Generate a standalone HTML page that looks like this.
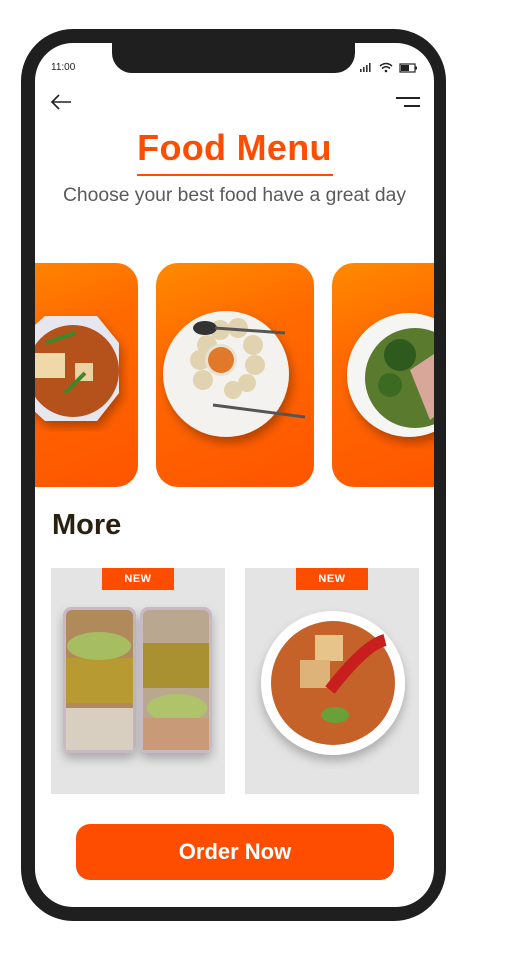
<!DOCTYPE html>
<html><head><meta charset="utf-8"><style>
*{margin:0;padding:0;box-sizing:border-box}
body{width:505px;height:974px;background:#fff;position:relative;overflow:hidden;font-family:"Liberation Sans",sans-serif}
.abs{position:absolute}
.phone{left:21px;top:29px;width:425px;height:892px;background:#1f1f1f;border-radius:52px}
.screen{left:35px;top:43px;width:399px;height:864px;background:#fff;border-radius:38px;overflow:hidden}
.notch{left:77px;top:0;width:243px;height:30px;background:#1f1f1f;border-radius:0 0 20px 20px}
.card{top:220px;height:224px;border-radius:22px;background:linear-gradient(160deg,#ff8a00 0%,#ff6a00 35%,#ff5500 100%)}
.tag{background:#ff4d00;color:#fff;font-weight:bold;font-size:11px;text-align:center;line-height:22px;letter-spacing:.5px}
</style></head><body>
<div class="abs phone"></div>
<div class="abs screen">
  <div class="abs notch"></div>
  <div class="abs" style="left:16px;top:19px;font-size:10px;color:#222">11:00</div>
  <svg class="abs" style="left:325px;top:18px" width="60" height="14" viewBox="0 0 60 14">
    <rect x="0" y="8" width="1.6" height="3" fill="#333"/><rect x="3" y="6" width="1.6" height="5" fill="#333"/><rect x="6" y="4" width="1.6" height="7" fill="#333"/><rect x="9" y="2" width="1.6" height="9" fill="#333"/>
    <path d="M20 5 Q26 0 32 5 M22 7.5 Q26 4 30 7.5" stroke="#222" stroke-width="1.5" fill="none"/><circle cx="26" cy="10" r="1.3" fill="#222"/>
    <rect x="40" y="3" width="15" height="8" fill="none" stroke="#222" stroke-width="1.2"/><rect x="41" y="4" width="8" height="6" fill="#222"/><rect x="55.5" y="5.5" width="1.5" height="3" fill="#222"/>
  </svg>
  <svg class="abs" style="left:15px;top:50px" width="24" height="18" viewBox="0 0 24 18"><path d="M2 9 H21 M9 2 L2 9 L9 16" stroke="#222" stroke-width="1.6" fill="none"/></svg>
  <div class="abs" style="left:361px;top:54px;width:24px;height:1.6px;background:#222"></div>
  <div class="abs" style="left:369px;top:62px;width:16px;height:1.6px;background:#222"></div>
  <div class="abs" style="left:0;top:84px;width:399px;text-align:center;font-size:36px;font-weight:bold;color:#ff4d00;letter-spacing:.3px">Food Menu</div>
  <div class="abs" style="left:102px;top:131px;width:196px;height:2px;background:#ff4d00"></div>
  <div class="abs" style="left:0;top:142px;width:399px;text-align:center;font-size:19.3px;color:#5a5a5a">Choose your best food have a great day</div>

  <div class="abs card" style="left:-60px;width:163px"></div>
  <div class="abs card" style="left:121px;width:158px"></div>
  <div class="abs card" style="left:297px;width:140px"></div>
  <svg class="abs" style="left:0;top:220px" width="399" height="224">
    <defs><filter id="sh"><feDropShadow dx="3" dy="6" stdDeviation="5" flood-color="#000" flood-opacity=".3"/></filter></defs>
    <polygon points="-20,80 10,53 62,53 84,80 84,130 62,158 10,158 -20,130" fill="#e6e6ee" filter="url(#sh)"/>
    <circle cx="38" cy="108" r="46" fill="#b5521c"/><rect x="0" y="90" width="30" height="25" fill="#f0d9a8"/><rect x="40" y="100" width="18" height="18" fill="#ecd2a2"/><path d="M10 80 L40 70 M30 130 L50 110" stroke="#3a8a2a" stroke-width="4"/>
    <g transform="translate(0,-43)">
    <circle cx="191" cy="154" r="63" fill="#f3f2ee" filter="url(#sh)"/>
    <g fill="#e2d3b0"><circle cx="165" cy="140" r="10"/><circle cx="172" cy="125" r="10"/><circle cx="185" cy="110" r="10"/><circle cx="203" cy="108" r="10"/><circle cx="218" cy="125" r="10"/><circle cx="220" cy="145" r="10"/><circle cx="212" cy="163" r="9"/><circle cx="168" cy="160" r="10"/><circle cx="198" cy="170" r="9"/></g>
    <circle cx="186" cy="140" r="16" fill="#e8e2d0"/><circle cx="186" cy="140" r="13" fill="#e07a2a"/>
    <ellipse cx="170" cy="108" rx="12" ry="7" fill="#333"/><path d="M180 108 L250 113" stroke="#555" stroke-width="3"/>
    <path d="M178 185 L270 197" stroke="#555" stroke-width="3"/>
    <circle cx="374" cy="155" r="62" fill="#f5f5f3" filter="url(#sh)"/>
    <circle cx="380" cy="158" r="50" fill="#5a7a2e"/><circle cx="365" cy="135" r="16" fill="#2f5a1e"/><circle cx="355" cy="165" r="12" fill="#3c6a22"/><path d="M375 150 L405 130 L420 180 L395 200 Z" fill="#d8a79a"/>
    </g>
  </svg>

  <div class="abs" style="left:17px;top:466px;font-size:29px;font-weight:bold;color:#2a2012">More</div>

  <div class="abs" style="left:16px;top:525px;width:174px;height:226px;background:#e4e4e4"></div>
  <div class="abs" style="left:210px;top:525px;width:174px;height:226px;background:#e4e4e4"></div>
  <div class="abs tag" style="left:67px;top:525px;width:72px;height:22px">NEW</div>
  <div class="abs tag" style="left:261px;top:525px;width:72px;height:22px">NEW</div>
  <svg class="abs" style="left:0;top:525px" width="399" height="226">
    <defs><filter id="sh2"><feDropShadow dx="0" dy="6" stdDeviation="5" flood-color="#000" flood-opacity=".25"/></filter></defs>
    <rect x="28" y="39" width="73" height="146" rx="8" fill="#c9b9c4" filter="url(#sh2)"/>
    <rect x="105" y="39" width="72" height="146" rx="8" fill="#c9b9c4" filter="url(#sh2)"/>
    <rect x="31" y="42" width="67" height="140" rx="6" fill="#b08a5a"/>
    <rect x="108" y="42" width="66" height="140" rx="6" fill="#b9a88f"/>
    <rect x="31" y="90" width="67" height="45" fill="#b89a32"/><rect x="108" y="75" width="66" height="45" fill="#a99030"/>
    <ellipse cx="64" cy="78" rx="32" ry="14" fill="#a6bd62"/><ellipse cx="142" cy="140" rx="30" ry="14" fill="#aec36a"/>
    <rect x="31" y="140" width="67" height="42" fill="#d8cfc0"/><rect x="108" y="150" width="66" height="32" fill="#c89a78"/>
    <g transform="translate(0,-43)">
    <circle cx="298" cy="158" r="72" fill="#fff" filter="url(#sh2)"/>
    <circle cx="298" cy="158" r="62" fill="#c4622a"/>
    <rect x="280" y="110" width="28" height="26" fill="#e6c48a"/><rect x="265" y="135" width="30" height="28" fill="#ddb37a"/>
    <path d="M295 165 Q330 120 350 115" stroke="#c81e1e" stroke-width="12" fill="none"/>
    <ellipse cx="300" cy="190" rx="14" ry="8" fill="#6aa03a"/>
    </g>
  </svg>

  <div class="abs" style="left:41px;top:781px;width:318px;height:56px;background:#ff4d00;border-radius:14px;color:#fff;font-weight:bold;font-size:22px;text-align:center;line-height:56px">Order Now</div>
</div>
</body></html>
